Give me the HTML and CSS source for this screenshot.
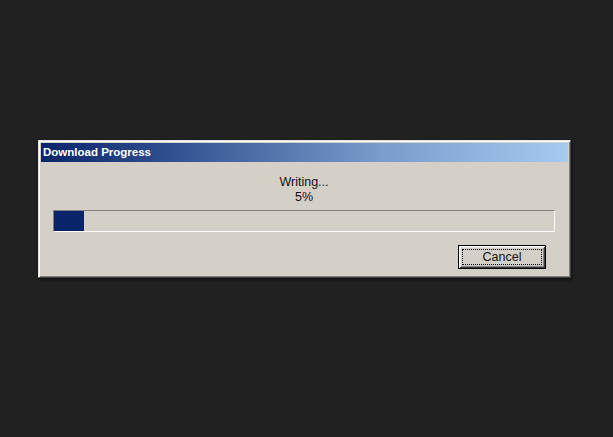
FILE: index.html
```html
<!DOCTYPE html>
<html>
<head>
<meta charset="utf-8">
<link rel="stylesheet" href="styles.css">
</head>
<body>
<div class="window">
  <div class="titlebar">Download Progress</div>
  <div class="content">
    <div class="status">
      <div>Writing...</div>
      <div>5%</div>
    </div>
    <div class="progress"><div class="fill" style="width:30px"></div></div>
    <div class="actions">
      <button class="btn"><span class="focus">Cancel</span></button>
    </div>
  </div>
</div>
</body>
</html>
```
FILE: styles.css
```css
html, body {
  margin: 0;
  padding: 0;
  background: #212121;
  width: 613px;
  height: 437px;
  overflow: hidden;
}
body {
  padding: 140px 0 0 38px;
  box-sizing: border-box;
  font-family: "Liberation Sans", Arial, sans-serif;
}
.window {
  width: 533px;
  height: 138px;
  box-sizing: border-box;
  background: #d4d0c8;
  border: 1px solid;
  border-color: #e4e2dc #404040 #404040 #e4e2dc;
  box-shadow: inset 1px 1px 0 #ffffff, inset -1px -1px 0 #808080, 1px 2px 3px rgba(0,0,0,0.5);
  padding: 2px;
  display: flex;
  flex-direction: column;
}
.titlebar {
  height: 19px;
  background: linear-gradient(to right, #0a246a 0%, #3a5a98 30%, #7b9ccc 65%, #a6caf0 100%);
  color: #fff;
  font-weight: bold;
  font-size: 11.5px;
  line-height: 19px;
  padding-left: 2px;
  font-family: "Liberation Sans", Arial, sans-serif;
}
.content {
  padding: 13px 13px 0 12px;
  display: flex;
  flex-direction: column;
}
.status {
  text-align: center;
  font-size: 12.5px;
  line-height: 15px;
  color: #111;
}
.progress {
  margin-top: 5px;
  height: 22px;
  box-sizing: border-box;
  border: 1px solid;
  border-color: #808080 #ffffff #ffffff #808080;
}
.fill {
  height: 100%;
  background: #0a246a;
}
.actions {
  display: flex;
  justify-content: flex-end;
  margin-top: 13px;
  padding-right: 9px;
}
.btn {
  width: 88px;
  height: 24px;
  box-sizing: border-box;
  margin: 0;
  padding: 0;
  background: #d4d0c8;
  border: 1px solid #000;
  box-shadow: inset 1px 1px 0 #ffffff, inset -1px -1px 0 #404040, inset 2px 2px 0 #e4e2dc, inset -2px -2px 0 #808080;
  font-family: "Liberation Sans", Arial, sans-serif;
  font-size: 12.5px;
  color: #111;
  display: flex;
  padding: 3px;
}
.focus {
  flex: 1;
  border: 1px dotted #000;
  display: flex;
  align-items: center;
  justify-content: center;
  line-height: 14px;
}
```
